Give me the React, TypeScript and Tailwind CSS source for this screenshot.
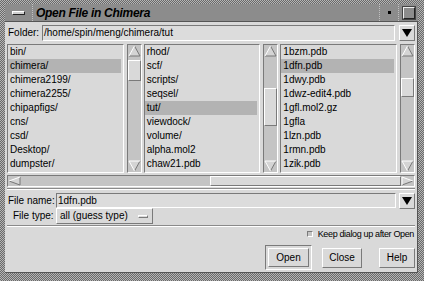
import React from "react";

const raised = "border border-t-white border-l-white border-b-[#7a7a7a] border-r-[#7a7a7a]";
const sunken = "border border-t-[#7a7a7a] border-l-[#7a7a7a] border-b-white border-r-white";

const lists = [
  {
    items: ["bin/", "chimera/", "chimera2199/", "chimera2255/", "chipapfigs/", "cns/", "csd/", "Desktop/", "dumpster/"],
    sel: 1,
    gap: "h-[3px]",
    thumb: "h-[21px]",
  },
  {
    items: ["rhod/", "scf/", "scripts/", "seqsel/", "tut/", "viewdock/", "volume/", "alpha.mol2", "chaw21.pdb"],
    sel: 4,
    gap: "h-[31px]",
    thumb: "h-[38px]",
  },
  {
    items: ["1bzm.pdb", "1dfn.pdb", "1dwy.pdb", "1dwz-edit4.pdb", "1gfl.mol2.gz", "1gfla", "1lzn.pdb", "1rmn.pdb", "1zik.pdb"],
    sel: 1,
    gap: "h-[21px]",
    thumb: "h-[19px]",
  },
];

const Arrow = ({ dir }: { dir: "up" | "down" | "left" | "right" }) => {
  const vertical = dir === "up" || dir === "down";
  const pts = {
    up: { poly: "6.5,1 12,11 1,11", light: "M6.5 1 L1 11", dark: "M6.5 1 L12 11 L1 11" },
    down: { poly: "1,1 12,1 6.5,11", light: "M1 1 L12 1 M1 1 L6.5 11", dark: "M12 1 L6.5 11" },
    left: { poly: "1,5 12,1 12,9", light: "M1 5 L12 1", dark: "M1 5 L12 9 L12 1" },
    right: { poly: "1,1 12,5 1,9", light: "M1 9 L1 1 L12 5", dark: "M12 5 L1 9" },
  }[dir];
  return (
    <svg
      width="13"
      height={vertical ? 12 : 10}
      viewBox={vertical ? "0 0 13 12" : "0 0 13 10"}
      className="block shrink-0"
    >
      <polygon points={pts.poly} fill="#d4d4d4" />
      <path d={pts.dark} stroke="#777" strokeWidth="1" fill="none" />
      <path d={pts.light} stroke="#fff" strokeWidth="1" fill="none" />
    </svg>
  );
};

const ComboArrow = () => (
  <div className={`w-[16px] h-[16px] bg-[#d9d9d9] flex items-center justify-center ${raised}`}>
    <svg width="10" height="8" viewBox="0 0 10 8">
      <polygon points="0,0 10,0 5,8" fill="#000" />
    </svg>
  </div>
);

export default function App() {
  return (
    <div className="w-[424px] h-[281px] overflow-hidden flex flex-col pl-[5px] pr-[6px] pt-[4px] pb-[8px] bg-[image:repeating-conic-gradient(#6a6a6a_0%_25%,#b4b4b4_0%_50%)] bg-[length:2px_2px] font-['Liberation_Sans',Arial,sans-serif] text-black">
      {/* title bar */}
      <div className="h-[18px] shrink-0 flex bg-[#8c8c8c] border-b border-[#555]">
        <div className="w-[28px] flex items-center justify-center border-r border-dotted border-[#c0c0c0]">
          <div className={`w-[13px] h-[4px] bg-[#cfcfcf] ${raised} border-b-[#222] border-r-[#222]`} />
        </div>
        <div className="flex-1 pl-[3px] flex items-center text-[12px] font-bold italic tracking-[-0.3px] leading-none">
          Open File in Chimera
        </div>
        <div className="w-[20px] flex items-center justify-center border-l border-r border-dotted border-[#c0c0c0]">
          <div className="w-[3px] h-[3px] bg-black" />
        </div>
        <div className="w-[19px] flex items-center justify-center">
          <div className="w-[12px] h-[12px] border border-[#222] border-t-[#eee] border-l-[#eee] outline outline-1 outline-[#444]" />
        </div>
      </div>

      {/* body */}
      <div className="flex-1 min-h-0 flex flex-col bg-[#d9d9d9] px-[2px] pt-[3px] border-r border-b border-[#555] text-[10px] leading-none">
        <div className="flex items-center h-[16px] gap-[2px]">
          <span className="pl-[1px] w-[33px]">Folder:</span>
          <div className={`flex-1 h-[16px] flex items-center pl-[1px] bg-[#dcdcdc] ${sunken}`}>/home/spin/meng/chimera/tut</div>
          <div className="pl-[2px]">
            <ComboArrow />
          </div>
        </div>

        <div className="mt-[3px] grid grid-cols-3 gap-[2px] h-[129px]">
          {lists.map((l, i) => (
            <div key={i} className="flex gap-[3px]">
              <div className={`flex-1 bg-[#d9d9d9] overflow-hidden ${sunken}`}>
                {l.items.map((t, j) => (
                  <div
                    key={t}
                    className={`h-[14px] flex items-center px-[2px] mr-[2px] whitespace-nowrap ${j === l.sel ? "bg-[#b3b3b3]" : ""}`}
                  >
                    {t}
                  </div>
                ))}
              </div>
              <div className={`w-[15px] flex flex-col bg-[#c4c4c4] ${sunken}`}>
                <Arrow dir="up" />
                <div className={l.gap} />
                <div className={`${l.thumb} bg-[#d9d9d9] ${raised}`} />
                <div className="flex-1" />
                <Arrow dir="down" />
              </div>
            </div>
          ))}
        </div>

        <div className={`mt-[2px] h-[12px] flex items-center bg-[#c4c4c4] ${sunken}`}>
          <Arrow dir="left" />
          <div className="flex-1 flex h-full">
            <div className="flex-1" />
            <div className={`flex-1 bg-[#d9d9d9] ${raised}`} />
          </div>
          <Arrow dir="right" />
        </div>

        <div className="mt-[1px] border-t border-[#8a8a8a] border-b border-b-white" />

        <div className="mt-[3px] flex items-center h-[15px] gap-[1px]">
          <span className="pl-[1px] w-[48px]">File name:</span>
          <div className={`flex-1 h-[15px] flex items-center pl-[1px] bg-[#dcdcdc] ${sunken}`}>1dfn.pdb</div>
          <div className="pl-[2px]">
            <ComboArrow />
          </div>
        </div>

        <div className="flex items-center h-[16px]">
          <span className="pl-[6px] w-[49px]">File type:</span>
          <div className={`w-[97px] h-[16px] flex items-center pl-[3px] pr-[4px] bg-[#d9d9d9] ${raised}`}>
            <span className="flex-1">all (guess type)</span>
            <div className={`w-[10px] h-[3px] bg-[#d9d9d9] ${raised}`} />
          </div>
        </div>

        <div className="mt-[1px] border-t border-[#8a8a8a] border-b border-b-white" />

        <div className="mt-[2px] flex items-center justify-end h-[10px] pr-[1px] text-[9px] tracking-[-0.35px]">
          <div className={`w-[6px] h-[6px] bg-[#c4c4c4] mr-[5px] ${sunken}`} />
          <span>Keep dialog up after Open</span>
        </div>

        <div className="mt-[6px] flex items-center justify-end">
          <div className={`p-[2px] ${sunken}`}>
            <div className={`w-[41px] h-[19px] flex items-center justify-center bg-[#d9d9d9] ${raised}`}>Open</div>
          </div>
          <div className={`ml-[10px] w-[40px] h-[20px] flex items-center justify-center bg-[#d9d9d9] ${raised}`}>Close</div>
          <div className={`ml-[17px] w-[36px] h-[20px] flex items-center justify-center bg-[#d9d9d9] ${raised}`}>Help</div>
        </div>
      </div>
    </div>
  );
}
